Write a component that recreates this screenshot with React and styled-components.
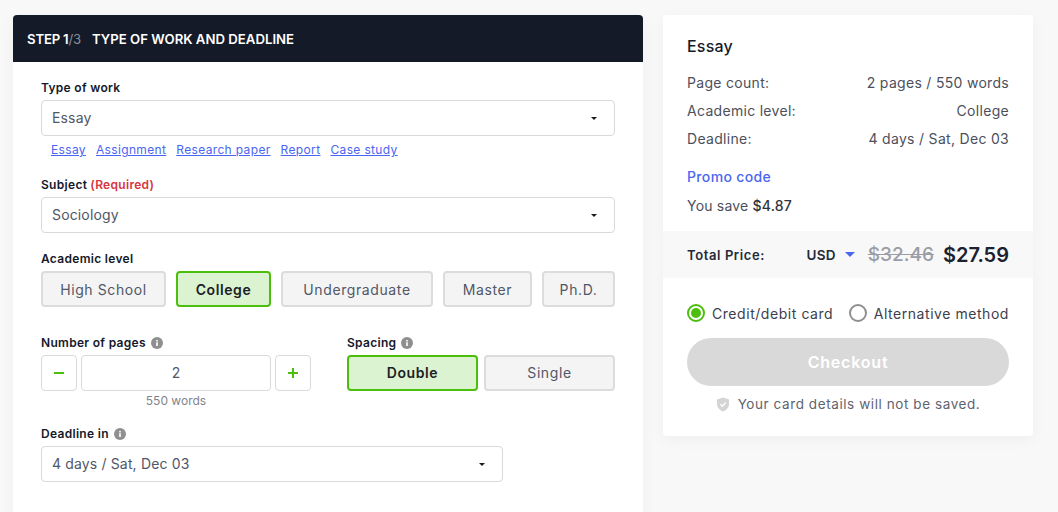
import React from 'react';
import styled, { createGlobalStyle } from 'styled-components';

const font = '"Inter", "Open Sans", "Liberation Sans", sans-serif';

const GlobalStyle = createGlobalStyle`
    * { box-sizing: border-box; }
    html, body { margin: 0; padding: 0; height: 100%; overflow: hidden; }
    body { background: #f8f8f8; font-family: ${font}; color: #14192a; }
`;

const Page = styled.div`
    display: flex;
    align-items: flex-start;
    gap: 20px;
    padding: 15px 0 0 13px;
    height: 512px;
    overflow: hidden;
`;

const FormCard = styled.section`
    width: 630px;
    flex-shrink: 0;
    background: #fff;
    border-radius: 4px;
    box-shadow: 0 4px 16px rgba(0,0,0,.04);
    min-height: 520px;
`;

const Header = styled.header`
    height: 47px;
    background: #141a28;
    border-radius: 4px 4px 0 0;
    padding: 0 14px;
    display: flex;
    align-items: center;
    gap: 11px;
    color: #fff;
    font-size: 13.2px;
    font-weight: 600;
`;

const StepCount = styled.span`
    letter-spacing: -.2px;
    & em { font-style: normal; font-weight: 400; color: #8b8f98; }
`;

const FormBody = styled.div`
    padding: 19px 28px 0;
    display: flex;
    flex-direction: column;
`;

const Field = styled.div`
    display: flex;
    flex-direction: column;
    margin-bottom: ${p => p.$mb || 0}px;
    width: ${p => p.$w ? `${p.$w}px` : 'auto'};
`;

const Label = styled.label`
    display: flex;
    align-items: center;
    gap: 5px;
    height: 13px;
    margin-bottom: 6px;
    font-size: 12px;
    font-weight: 600;
    letter-spacing: .3px;
    color: #14192a;
    white-space: nowrap;
`;

const Required = styled.span`
    color: #d8333f;
    margin-left: -2px;
`;

const Select = styled.div`
    height: 36px;
    border: 1px solid #d9d9d9;
    border-radius: 4px;
    padding: 0 18px 1px 10px;
    display: flex;
    align-items: center;
    justify-content: space-between;
    font-size: 14px;
    letter-spacing: .15px;
    color: #515767;
    background: #fff;
`;

const Caret = styled.i`
    width: 0;
    height: 0;
    border-left: 3px solid transparent;
    border-right: 3px solid transparent;
    border-top: 3px solid #1a1a1a;
    margin-right: -1px;
    margin-top: 2px;
`;

const QuickLinks = styled.div`
    display: flex;
    gap: 10px;
    padding: 7px 0 0 10px;
    height: 23px;
    margin-bottom: 19px;
`;

const QuickLink = styled.a`
    font-size: 12px;
    line-height: 14px;
    letter-spacing: .35px;
    color: #4a66f0;
    text-decoration: underline;
`;

const ChoiceRow = styled.div`
    display: flex;
    gap: ${p => p.$gap}px;
`;

const Choice = styled.button`
    width: ${p => p.$w}px;
    height: 36px;
    padding: 0 0 ${p => p.$pb ?? 2}px;
    border-radius: 4px;
    border: 2px solid ${p => p.$active ? '#4bbf0c' : '#dcdcdc'};
    background: ${p => p.$active ? '#dcf3d1' : '#f4f4f4'};
    color: ${p => p.$active ? '#1c2024' : '#515767'};
    font-family: ${font};
    font-size: 14px;
    font-weight: ${p => p.$active ? 600 : 400};
    letter-spacing: .6px;
`;

const Columns = styled.div`
    display: flex;
    gap: 36px;
    margin-bottom: 19px;
`;

const Stepper = styled.div`
    display: flex;
    gap: 4px;
`;

const StepButton = styled.button`
    width: 36px;
    height: 36px;
    padding: 0;
    border: 1px solid #d9d9d9;
    border-radius: 4px;
    background: #fff;
    display: flex;
    align-items: center;
    justify-content: center;
`;

const PageInput = styled.div`
    width: 190px;
    height: 36px;
    padding-bottom: 1px;
    border: 1px solid #d9d9d9;
    border-radius: 4px;
    display: flex;
    align-items: center;
    justify-content: center;
    font-size: 14px;
    color: #515767;
`;

const Words = styled.div`
    width: 190px;
    margin: 3px 0 0 40px;
    text-align: center;
    font-size: 12px;
    line-height: 14px;
    color: #7e838e;
`;

const SummaryCard = styled.aside`
    width: 370px;
    flex-shrink: 0;
    background: #fff;
    border-radius: 4px;
    box-shadow: 0 4px 16px rgba(0,0,0,.04);
    padding-top: 21px;
`;

const SummaryTop = styled.div`
    padding: 0 24px;
    height: 195px;
`;

const SummaryTitle = styled.h2`
    margin: 0 0 13px;
    font-size: 16px;
    line-height: 20px;
    font-weight: 500;
    letter-spacing: .2px;
    color: #14192a;
`;

const SummaryRow = styled.div`
    display: flex;
    justify-content: space-between;
    height: 28px;
    line-height: 28px;
    font-size: 14px;
    letter-spacing: .3px;
    color: #4c505c;
`;

const Promo = styled.a`
    display: block;
    margin-top: 14px;
    line-height: 20px;
    font-size: 14px;
    font-weight: 500;
    letter-spacing: .35px;
    color: #4a66f0;
`;

const Save = styled.div`
    margin-top: 9px;
    line-height: 20px;
    font-size: 14px;
    letter-spacing: .2px;
    color: #4c505c;
    & b { font-weight: 500; color: #30343e; }
`;

const TotalBar = styled.div`
    height: 47px;
    background: #f8f8f8;
    padding: 0 24px;
    display: flex;
    align-items: center;
`;

const TotalLabel = styled.span`
    flex-grow: 1;
    font-size: 13px;
    font-weight: 600;
    letter-spacing: .6px;
    color: #252a38;
`;

const Currency = styled.span`
    display: flex;
    align-items: center;
    gap: 9px;
    margin-right: 13px;
    font-size: 13.5px;
    font-weight: 600;
    letter-spacing: .3px;
    color: #252a38;
    &::after {
        content: '';
        border-left: 5px solid transparent;
        border-right: 5px solid transparent;
        border-top: 5px solid #4a66f0;
    }
`;

const OldPrice = styled.span`
    font-size: 19px;
    font-weight: 500;
    color: #9a9da5;
    text-decoration: line-through;
    margin-right: 9px;
`;

const NewPrice = styled.span`
    font-size: 20px;
    font-weight: 600;
    color: #1c2130;
`;

const Payment = styled.div`
    padding: 25px 24px 23px;
`;

const Methods = styled.div`
    display: flex;
    justify-content: space-between;
    margin-bottom: 15px;
`;

const Method = styled.label`
    display: flex;
    align-items: center;
    gap: 7px;
    height: 20px;
    font-size: 14px;
    letter-spacing: .55px;
    color: #3c404c;
`;

const Radio = styled.span`
    width: 18px;
    height: 18px;
    border-radius: 50%;
    border: 2px solid ${p => p.$on ? '#4bbf0c' : '#8f8f8f'};
    padding: 2px;
    &::after {
        content: '';
        display: ${p => p.$on ? 'block' : 'none'};
        width: 10px;
        height: 10px;
        border-radius: 50%;
        background: #4bbf0c;
    }
`;

const Checkout = styled.button`
    display: block;
    width: 100%;
    height: 48px;
    border: 0;
    border-radius: 24px;
    background: #d9d9d9;
    color: #fff;
    font-family: ${font};
    font-size: 16px;
    font-weight: 600;
    letter-spacing: .8px;
`;

const Note = styled.div`
    margin-top: 9px;
    display: flex;
    justify-content: center;
    align-items: center;
    gap: 8px;
    height: 18px;
    font-size: 13.5px;
    letter-spacing: .58px;
    color: #5f636e;
`;

const Info = () => (
    <svg width="12" height="12" viewBox="0 0 12 12">
        <circle cx="6" cy="6" r="6" fill="#8f8f8f" />
        <rect x="5.2" y="5.2" width="1.6" height="3.8" fill="#fff" />
        <rect x="5.2" y="3" width="1.6" height="1.5" fill="#fff" />
    </svg>
);

const Shield = () => (
    <svg width="14" height="15" viewBox="0 0 14 15">
        <path d="M7 .5 13 2.5V7c0 3.6-2.6 6.2-6 7.5C3.6 13.2 1 10.6 1 7V2.5Z" fill="#d4d4d4" />
        <path d="M4.4 7.2 6.4 9.2 9.8 5.6" fill="none" stroke="#fff" strokeWidth="1.4" />
    </svg>
);

const Minus = () => (
    <svg width="12" height="12" viewBox="0 0 12 12"><rect x="1" y="5" width="10" height="2" fill="#4bbf0c" /></svg>
);

const Plus = () => (
    <svg width="12" height="12" viewBox="0 0 12 12"><path d="M1 6h10M6 1v10" stroke="#4bbf0c" strokeWidth="2" /></svg>
);

const links = ['Essay', 'Assignment', 'Research paper', 'Report', 'Case study'];
const levels = [
    { name: 'High School', w: 125 },
    { name: 'College', w: 95, active: true },
    { name: 'Undergraduate', w: 152 },
    { name: 'Master', w: 89 },
    { name: 'Ph.D.', w: 73 },
];
const summary = [
    ['Page count:', '2 pages / 550 words'],
    ['Academic level:', 'College'],
    ['Deadline:', '4 days / Sat, Dec 03'],
];

export default function App() {
    return (
        <Page>
            <GlobalStyle />
            <FormCard>
                <Header>
                    <StepCount>STEP 1<em>/3</em></StepCount>
                    <span>TYPE OF WORK AND DEADLINE</span>
                </Header>
                <FormBody>
                    <Field>
                        <Label>Type of work</Label>
                        <Select>Essay<Caret /></Select>
                        <QuickLinks>
                            {links.map(l => <QuickLink key={l}>{l}</QuickLink>)}
                        </QuickLinks>
                    </Field>
                    <Field $mb={19}>
                        <Label>Subject <Required>(Required)</Required></Label>
                        <Select>Sociology<Caret /></Select>
                    </Field>
                    <Field $mb={29}>
                        <Label>Academic level</Label>
                        <ChoiceRow $gap={10}>
                            {levels.map(l => <Choice key={l.name} $w={l.w} $pb={0} $active={l.active}>{l.name}</Choice>)}
                        </ChoiceRow>
                    </Field>
                    <Columns>
                        <Field $w={270}>
                            <Label>Number of pages <Info /></Label>
                            <Stepper>
                                <StepButton><Minus /></StepButton>
                                <PageInput>2</PageInput>
                                <StepButton><Plus /></StepButton>
                            </Stepper>
                            <Words>550 words</Words>
                        </Field>
                        <Field $w={268}>
                            <Label>Spacing <Info /></Label>
                            <ChoiceRow $gap={6}>
                                <Choice $w={131} $active>Double</Choice>
                                <Choice $w={131}>Single</Choice>
                            </ChoiceRow>
                        </Field>
                    </Columns>
                    <Field $w={462}>
                        <Label>Deadline in <Info /></Label>
                        <Select>4 days / Sat, Dec 03<Caret /></Select>
                    </Field>
                </FormBody>
            </FormCard>
            <SummaryCard>
                <SummaryTop>
                    <SummaryTitle>Essay</SummaryTitle>
                    {summary.map(([k, v]) => (
                        <SummaryRow key={k}><span>{k}</span><span>{v}</span></SummaryRow>
                    ))}
                    <Promo>Promo code</Promo>
                    <Save>You save <b>$4.87</b></Save>
                </SummaryTop>
                <TotalBar>
                    <TotalLabel>Total Price:</TotalLabel>
                    <Currency>USD</Currency>
                    <OldPrice>$32.46</OldPrice>
                    <NewPrice>$27.59</NewPrice>
                </TotalBar>
                <Payment>
                    <Methods>
                        <Method><Radio $on />Credit/debit card</Method>
                        <Method><Radio />Alternative method</Method>
                    </Methods>
                    <Checkout>Checkout</Checkout>
                    <Note><Shield />Your card details will not be saved.</Note>
                </Payment>
            </SummaryCard>
        </Page>
    );
}
